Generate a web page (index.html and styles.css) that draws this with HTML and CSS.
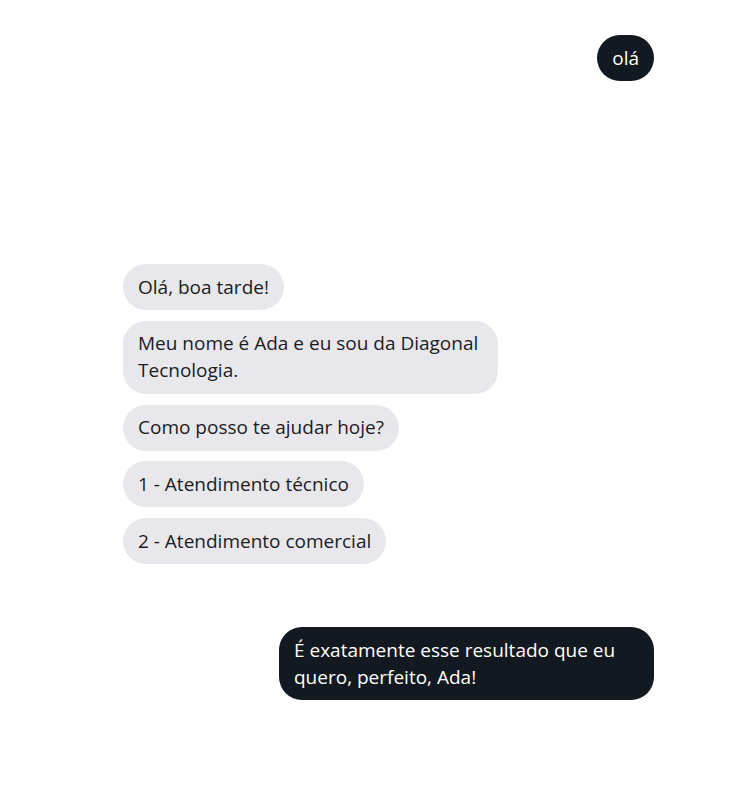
FILE: index.html
```html
<!DOCTYPE html>
<html lang="pt">
<head>
<meta charset="utf-8">
<link rel="stylesheet" href="styles.css">
</head>
<body>
<div class="chat">
  <div class="group user first">
    <div class="bubble">olá</div>
  </div>
  <div class="group bot">
    <div class="bubble">Olá, boa tarde!</div>
    <div class="bubble">Meu nome é Ada e eu sou da Diagonal Tecnologia.</div>
    <div class="bubble">Como posso te ajudar hoje?</div>
    <div class="bubble">1 - Atendimento técnico</div>
    <div class="bubble">2 - Atendimento comercial</div>
  </div>
  <div class="group user last">
    <div class="bubble">É exatamente esse resultado que eu quero, perfeito, Ada!</div>
  </div>
</div>
</body>
</html>
```
FILE: styles.css
```css
html, body {
  margin: 0;
  padding: 0;
  background: #ffffff;
}
.chat {
  width: 531px;
  margin-left: 123px;
  padding-top: 35px;
  display: flex;
  flex-direction: column;
  font-family: "Open Sans", "Noto Sans", sans-serif;
  font-size: 19px;
  line-height: 27px;
}
.group {
  display: flex;
  flex-direction: column;
  gap: 10.75px;
}
.user { align-items: flex-end; }
.bot { align-items: flex-start; margin-top: 183px; }
.user.last { margin-top: 63px; }
.bubble {
  max-width: 375px;
  box-sizing: border-box;
  padding: 9.5px 15px;
  border-radius: 23px;
}
.user .bubble {
  background: #121920;
  color: #ffffff;
}
.bot .bubble {
  background: #e8e7ec;
  color: #1c1c1e;
}
```
